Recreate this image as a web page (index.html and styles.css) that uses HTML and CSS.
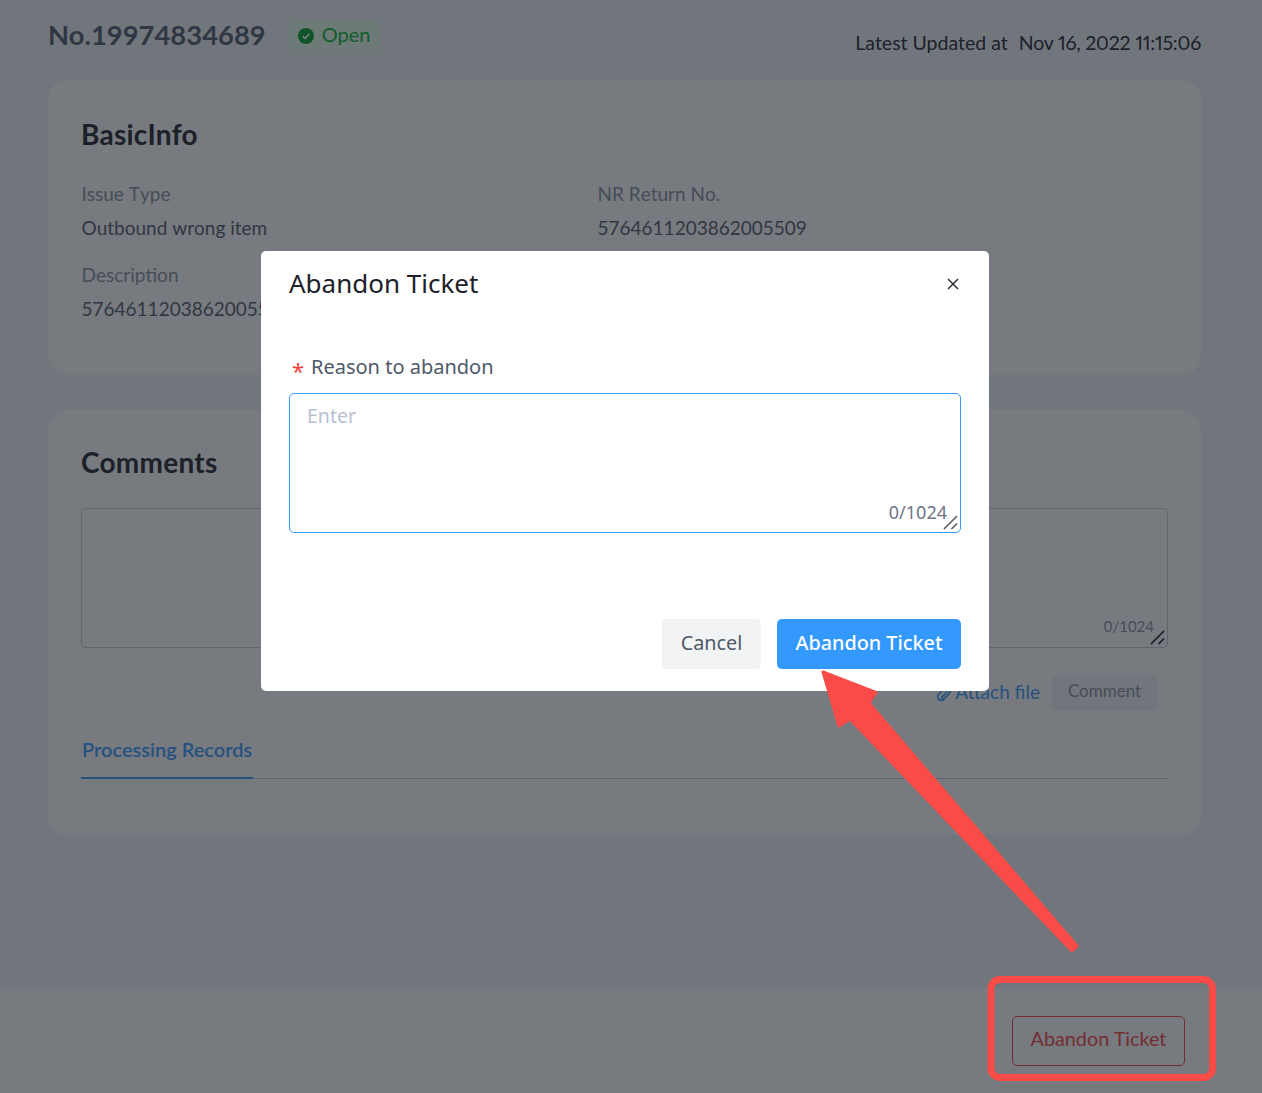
FILE: index.html
```html
<!DOCTYPE html>
<html lang="en">
<head>
<meta charset="utf-8">
<title>Abandon Ticket</title>
<link rel="stylesheet" href="styles.css">
</head>
<body>
<div class="page">
  <main class="content">
    <header class="head">
      <div class="head-left">
        <h1 class="ticket-no">No.19974834689</h1>
        <span class="badge">
          <svg class="badge-icon" viewBox="0 0 16 16"><circle cx="8" cy="8" r="8" fill="#00a02a"/><path d="M4.6 8.2l2.4 2.3 4.3-4.6" fill="none" stroke="#fff" stroke-width="1.6"/></svg>
          Open
        </span>
      </div>
      <div class="updated"><span>Latest Updated at</span><span class="updated-date">Nov 16, 2022 11:15:06</span></div>
    </header>

    <section class="card card-info">
      <h2 class="card-title">BasicInfo</h2>
      <div class="info-grid">
        <div class="info-item">
          <div class="info-label">Issue Type</div>
          <div class="info-value">Outbound wrong item</div>
        </div>
        <div class="info-item">
          <div class="info-label">NR Return No.</div>
          <div class="info-value">5764611203862005509</div>
        </div>
        <div class="info-item">
          <div class="info-label">Description</div>
          <div class="info-value">5764611203862005509</div>
        </div>
      </div>
    </section>

    <section class="card card-comments">
      <h2 class="card-title">Comments</h2>
      <div class="comment-box">
        <span class="comment-count">0/1024</span>
        <svg class="grip grip-bg" viewBox="0 0 16 16"><path d="M1 15L15 1M9 15l6-6" stroke="#24272e" stroke-width="1.8" fill="none"/></svg>
      </div>
      <div class="comment-actions">
        <span class="attach">
          <svg class="attach-icon" viewBox="0 0 14 14"><path d="M10.500 4.500L5.300 9.700a1.300 1.300 0 0 0 1.900 1.900l5-5a3.500 3.500 0 0 0-5-5L1.500 7.200a4 4 0 0 0 5.600 5.600" fill="none" stroke="#3399ff" stroke-width="1.700"/></svg>
          Attach file
        </span>
        <span class="btn-comment">Comment</span>
      </div>
      <div class="tabs"><span class="tab">Processing Records</span></div>
    </section>
  </main>

  <footer class="footer">
    <span class="btn-danger">Abandon Ticket</span>
  </footer>
</div>

<div class="overlay">
  <div class="modal">
    <div class="modal-head">
      <h3 class="modal-title">Abandon Ticket</h3>
      <svg class="modal-close" viewBox="0 0 12 12"><path d="M1 1l10 10M11 1L1 11" stroke="#2b2f38" stroke-width="1.5" fill="none"/></svg>
    </div>
    <div class="field-label"><span class="req">*</span><span>Reason to abandon</span></div>
    <div class="field-box">
      <span class="field-placeholder">Enter</span>
      <span class="field-count">0/1024</span>
      <svg class="grip grip-modal" viewBox="0 0 16 16"><path d="M1 15L15 1M9 15l6-6" stroke="#555" stroke-width="1.6" fill="none"/></svg>
    </div>
    <div class="modal-foot">
      <span class="btn btn-cancel">Cancel</span>
      <span class="btn btn-primary">Abandon Ticket</span>
    </div>
  </div>
</div>

<svg class="annotation" viewBox="0 0 1262 1093">
  <rect x="991" y="979.5" width="221.500" height="98" rx="9" fill="none" stroke="#f94c48" stroke-width="7"/>
  <path d="M823 672L876 692.500L869 703L1077 946L1072 951L850 719L839 726Z" fill="#f94c48" stroke="#f94c48" stroke-width="3" stroke-linejoin="round"/>
</svg>
</body>
</html>
```
FILE: styles.css
```css
* { box-sizing: border-box; }
html, body { margin: 0; padding: 0; }
body {
  width: 1262px;
  height: 1093px;
  overflow: hidden;
  position: relative;
  font-family: "Lato", "Open Sans", sans-serif;
  background: #f1f5fb;
}
.page { height: 1093px; display: flex; flex-direction: column; }
.content { flex: 1; padding: 0 61px 0 48px; }

.head { height: 80px; display: flex; justify-content: space-between; }
.head-left { display: flex; align-items: flex-start; gap: 23px; padding-top: 19px; }
.ticket-no { margin: 0; font-size: 27.4px; line-height: 32px; font-weight: 700; color: #4e5969; height: 32px; }
.badge {
  height: 34px; width: 90px; padding: 0 0 6px 9px; margin-top: 1px;
  display: flex; align-items: center; gap: 8px;
  background: #e8ffea; border-radius: 3px;
  color: #00b42a; font-size: 20px;
}
.badge-icon { width: 16px; height: 16px; margin-top: 4px; }
.updated { padding-top: 31px; font-size: 19.5px; line-height: 24px; color: #1d2129; display: flex; gap: 11px; }
.updated-date { font-variant-numeric: proportional-nums; letter-spacing: -0.2px; }

.card { background: #fff; border-radius: 20px; padding: 0 33px; }
.card-info { height: 295px; padding-top: 38px; margin-bottom: 35px; }
.card-comments { height: 425px; padding-top: 36px; }
.card-title { margin: 0; font-size: 28px; letter-spacing: 0.25px; line-height: 32px; font-weight: 700; color: #1d2129; height: 32px; }

.info-grid { display: grid; grid-template-columns: 516px 1fr; row-gap: 23px; margin-top: 32px; padding-left: 0.5px; }
.info-label { font-size: 19px; line-height: 24px; color: #86909c; font-kerning: none; }
.info-value { margin-top: 10px; font-size: 19px; line-height: 24px; color: #4e5969; white-space: nowrap; font-kerning: none; }

.comment-box {
  position: relative; height: 140px; margin-top: 30px;
  border: 1px solid #c9cdd4; border-radius: 5px;
}
.comment-count { position: absolute; right: 13px; bottom: 11px; font-size: 15px; line-height: 20px; color: #86909c; }
.grip { position: absolute; width: 15px; height: 15px; }
.grip-bg { right: 2px; bottom: 2px; }

.comment-actions { display: flex; justify-content: flex-end; align-items: center; height: 35px; margin-top: 27px; padding-right: 11px; }
.attach { display: flex; align-items: center; gap: 4px; color: #3399ff; font-size: 19px; margin-right: 12px; padding-bottom: 3px; }
.attach-icon { width: 14px; height: 14px; margin-top: 5px; }
.btn-comment {
  width: 105px; height: 35px; display: flex; align-items: center; justify-content: center;
  background: #f2f3f5; border-radius: 4px; color: #86909c; font-size: 17px; padding-bottom: 5px;
}

.tabs { height: 53px; margin-top: 16px; border-bottom: 1px solid #c9cdd4; }
.tab {
  display: inline-block; height: 53px; padding: 11px 0 0 1px;
  color: #3399ff; font-size: 20px; line-height: 24px; font-weight: 600;
  border-bottom: 2px solid #3399ff;
  width: 172px;
  white-space: nowrap;
}

.footer { height: 105px; background: #fff; display: flex; justify-content: flex-end; align-items: flex-start; padding: 28px 77px 0 0; }
.btn-danger {
  width: 173px; height: 50px; display: flex; align-items: center; justify-content: center;
  border: 1px solid #f53f3f; border-radius: 5px; color: #f53f3f; font-size: 19.8px; padding-bottom: 7px;
}

.overlay {
  position: absolute; inset: 0;
  background: rgba(29, 33, 41, 0.6);
  padding: 251px 0 0 261px;
}
.modal {
  width: 728px; height: 440px;
  background: #fff; border-radius: 5px;
  padding: 0 28px;
  display: flex; flex-direction: column;
  font-family: "Noto Sans", "Open Sans", sans-serif;
}
.modal-head { height: 66px; display: flex; align-items: center; justify-content: space-between; }
.modal-title { margin: -1px 0 1px; font-size: 26px; line-height: 34px; font-weight: 400; color: #1d2129; }
.modal-close { width: 12px; height: 12px; margin-right: 2px; }
.field-label { display: flex; align-items: center; margin: 33px 0 1px; height: 32px; font-size: 20px; color: #4e5969; }
.req { width: 22px; padding-left: 3px; color: #f53f3f; font-size: 22px; position: relative; top: 4px; }
.field-box {
  position: relative; height: 140px; margin-top: 10px;
  border: 1px solid #3399ff; border-radius: 5px;
  padding: 8px 17px;
}
.field-placeholder { font-size: 19.5px; line-height: 28px; color: #b8c0d2; }
.field-count { position: absolute; right: 13px; bottom: 8px; font-size: 18px; line-height: 24px; color: #6e7488; }
.grip-modal { right: 2px; bottom: 2px; }
.modal-foot { display: flex; justify-content: flex-end; gap: 16px; margin-top: 86px; }
.btn {
  height: 50px; border-radius: 5px; display: flex; align-items: center; justify-content: center;
  font-size: 19.8px; padding-bottom: 3px;
}
.btn-cancel { width: 99px; background: #f2f3f5; color: #4e5969; }
.btn-primary { width: 184px; background: #3399ff; color: #fff; font-weight: 500; }

.annotation { position: absolute; left: 0; top: 0; width: 1262px; height: 1093px; pointer-events: none; }
```
